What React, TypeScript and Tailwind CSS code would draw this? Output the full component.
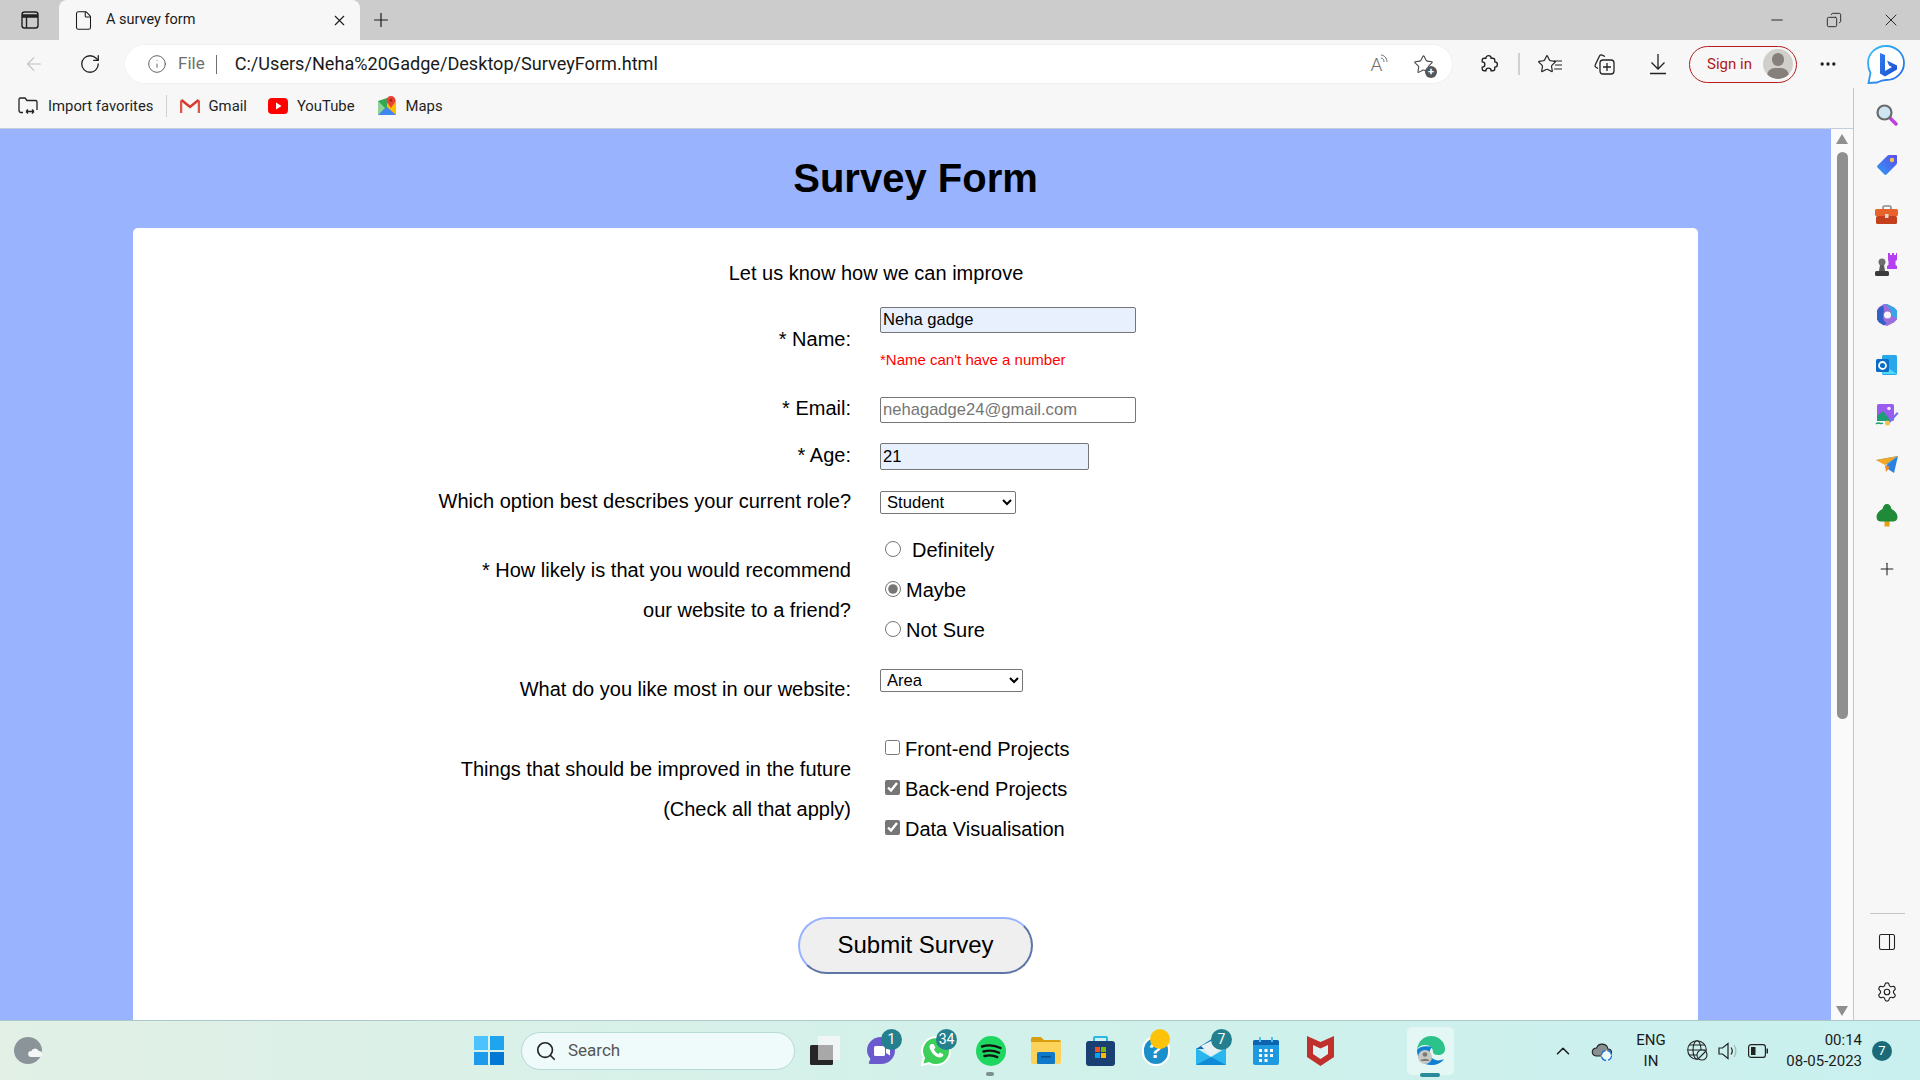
import type { ReactNode } from "react";
import {
  ArrowLeft,
  ChevronUp,
  Copy,
  Ellipsis,
  File,
  Info,
  Minus,
  PanelRight,
  Plus,
  RotateCw,
  Search,
  Settings,
  Star,
  X,
} from "lucide-react";

const ui = "font-['Roboto','Noto_Sans',sans-serif]";

function Slot({ children, className = "" }: { children: ReactNode; className?: string }) {
  return <div className={`flex h-[38px] w-[44px] shrink-0 items-center justify-center ${className}`}>{children}</div>;
}

function SideSlot({ children, className = "" }: { children: ReactNode; className?: string }) {
  return <div className={`flex h-[50px] w-full shrink-0 items-center justify-center ${className}`}>{children}</div>;
}

function TaskSlot({ children, badge, dot }: { children: ReactNode; badge?: string; dot?: boolean }) {
  return (
    <div className="relative flex h-[60px] w-[55px] shrink-0 items-center justify-center">
      {children}
      {badge && (
        <span className="absolute left-[28px] top-[8px] flex h-[21px] min-w-[21px] items-center justify-center rounded-full bg-[#24808f] px-[2px] text-[14px] text-white">
          {badge}
        </span>
      )}
      {dot && <span className="absolute left-[23px] bottom-[5px] h-[4px] w-[8px] rounded-full bg-[#7b8f91]" />}
    </div>
  );
}

function Bing() {
  return (
    <svg width="40" height="40" viewBox="0 0 40 40">
      <defs>
        <linearGradient id="bingRing" x1="0" y1="0" x2="1" y2="1">
          <stop offset="0" stopColor="#36c5f0" />
          <stop offset="1" stopColor="#2563eb" />
        </linearGradient>
        <linearGradient id="bingB" x1="0" y1="0" x2="1" y2="1">
          <stop offset="0" stopColor="#2f7df0" />
          <stop offset="1" stopColor="#1a4fd0" />
        </linearGradient>
      </defs>
      <path d="M20 2c10 0 18 7.500 18 17s-8 17-18 17c-3 0-6 1-9 2.500L2.500 39 4.500 29C2.800 26 2 22.500 2 19 2 9.500 10 2 20 2z" fill="#fff" stroke="url(#bingRing)" strokeWidth="1.800" />
      <path d="M14 9l5 2v16l7-4-3-1.500-2-5 10 5v4l-12 7-5-3z" fill="url(#bingB)" />
    </svg>
  );
}

function Gmail() {
  return (
    <svg width="20" height="16" viewBox="0 0 20 16">
      <path d="M1 15V2l9 7 9-7v13" fill="none" stroke="#e8e8e8" strokeWidth="2" />
      <path d="M1 15V2.500M19 15V2.500" stroke="#d9574a" strokeWidth="2.500" />
      <path d="M1.500 2l8.500 7 8.500-7" fill="none" stroke="#d93a2e" strokeWidth="2.500" />
    </svg>
  );
}

function YouTube() {
  return (
    <svg width="20" height="16" viewBox="0 0 20 16">
      <rect width="20" height="16" rx="4" fill="#f00" />
      <path d="M8 4.500l5.500 3.500L8 11.500z" fill="#fff" />
    </svg>
  );
}

function Maps() {
  return (
    <svg width="20" height="20" viewBox="0 0 20 20">
      <path d="M1 5l9-3v16l-9 1z" fill="#34a853" />
      <path d="M10 2l9 2v15l-9-1z" fill="#fbbc04" />
      <path d="M1 19l9-8 9 8z" fill="#4285f4" />
      <path d="M1 5l7 7-7 7z" fill="#8fd39c" />
      <path d="M14 0c2.500 0 4.500 2 4.500 4.300 0 2.700-3 5-4.500 7.700-1.500-2.700-4.500-5-4.500-7.700C9.500 2 11.500 0 14 0z" fill="#ea4335" />
      <circle cx="14" cy="4.300" r="1.500" fill="#a52714" />
    </svg>
  );
}

function SideIcons() {
  return (
    <>
      <SideSlot>
        <svg width="22" height="22" viewBox="0 0 22 22">
          <path d="M13 13l7 7" stroke="#c13fe0" strokeWidth="3.500" strokeLinecap="round" />
          <circle cx="8.500" cy="8.500" r="7" fill="#cfe6f2" stroke="#6b6b6b" strokeWidth="2.200" />
        </svg>
      </SideSlot>
      <SideSlot>
        <svg width="22" height="22" viewBox="0 0 22 22">
          <defs>
            <linearGradient id="tagFill" x1="1" y1="0" x2="0" y2="1">
              <stop offset="0" stopColor="#5b4df0" />
              <stop offset="1" stopColor="#2f9af2" />
            </linearGradient>
          </defs>
          <path d="M13 1h7a1 1 0 0 1 1 1v7a2 2 0 0 1-.600 1.400L10.500 20.500a1.500 1.500 0 0 1-2 0L1.500 13.500a1.500 1.500 0 0 1 0-2L11.600 1.600A2 2 0 0 1 13 1z" fill="url(#tagFill)" />
          <circle cx="16" cy="6" r="2.200" fill="#f5c542" />
        </svg>
      </SideSlot>
      <SideSlot>
        <svg width="24" height="20" viewBox="0 0 24 20">
          <path d="M8 5V2.500A1.500 1.500 0 0 1 9.500 1h5A1.500 1.500 0 0 1 16 2.500V5" fill="none" stroke="#8a8a8a" strokeWidth="1.600" />
          <rect y="4" width="23" height="7" rx="1.500" fill="#e8622c" />
          <rect x="1" y="11" width="21" height="8" rx="1.500" fill="#c4401c" />
          <rect x="10" y="9" width="3.500" height="4" rx=".6" fill="#d9d9d9" />
        </svg>
      </SideSlot>
      <SideSlot>
        <svg width="24" height="24" viewBox="0 0 24 24">
          <path d="M14 1h2v2h2V1h2v2h2V1h1v7l-1.500 1v4l1.500 1v3H13v-3l1.500-1V9L14 8z" fill="#b43ff0" transform="translate(-1 -1)" />
          <circle cx="7" cy="9" r="3.500" fill="#6e6e6e" />
          <path d="M5 12h4l1 6H4z" fill="#5a5a5a" />
          <rect y="18" width="14" height="5" rx="1.500" fill="#3b3b3b" />
        </svg>
      </SideSlot>
      <SideSlot>
        <svg width="22" height="24" viewBox="0 0 22 24">
          <path d="M11 1l7 3.500 3 3v9l-3 3-7 3.500-3-1-5-3-2-3v-9l2-3 5-3z" fill="#9a6fdc" />
          <path d="M9 1.500L11 1l7 3.500 3 3v8l-5-3c-.500-5-3-9-7-11.500z" fill="#36a6e6" />
          <path d="M1 8l2-3 4-2.500C9 7 7 10 7 14c0 3 1.500 5 3.500 6L8 22.500 3 19.500l-2-3z" fill="#3260c4" />
          <circle cx="11.500" cy="12" r="3.500" fill="#f7f7f7" />
        </svg>
      </SideSlot>
      <SideSlot>
        <svg width="22" height="22" viewBox="0 0 22 22">
          <rect x="6" y="1" width="15" height="20" rx="1.500" fill="#28a8ea" />
          <path d="M6 10l15 10H8a2 2 0 0 1-2-2z" fill="#50d9ff" />
          <rect y="5" width="13" height="13" rx="1.500" fill="#0a6cc4" />
          <circle cx="6.500" cy="11.500" r="3.500" fill="none" stroke="#fff" strokeWidth="1.800" />
        </svg>
      </SideSlot>
      <SideSlot>
        <svg width="24" height="24" viewBox="0 0 24 24">
          <rect x="2" y="1" width="17" height="17" rx="1.500" fill="#9a5cf0" />
          <path d="M2 18v-5l6-5 8 10z" fill="#1f9d77" />
          <circle cx="14" cy="5.500" r="1.800" fill="#f0e6ff" />
          <path d="M1 21c3-3 4 1 7-1" stroke="#16a06e" strokeWidth="1.500" fill="none" />
          <path d="M13 19L22 9l1.500 1.500L15 20z" fill="#7a6cf5" />
          <circle cx="12.500" cy="20" r="2.500" fill="#f2c14e" />
        </svg>
      </SideSlot>
      <SideSlot>
        <svg width="24" height="18" viewBox="0 0 24 18">
          <path d="M1 4l22-4-8 10z" fill="#35a6f0" />
          <path d="M1 4l9 5 13-9z" fill="#f5a623" />
          <path d="M23 0l-4 17-9-6z" fill="#2a7fe0" />
          <path d="M10 9l1 7 4-5z" fill="#f08a24" />
        </svg>
      </SideSlot>
      <SideSlot>
        <svg width="22" height="24" viewBox="0 0 22 24">
          <rect x="8.500" y="17" width="5" height="6.500" fill="#e8a013" />
          <path d="M11 1c2.500 0 4 2 4.500 5C19 7.500 21.500 11 21.500 14c0 3-2 4.500-4.500 4.500H5C2.500 18.500.5 17 .5 14c0-3 2.500-6.500 6-8C7 3 8.500 1 11 1z" fill="#1f8a38" />
        </svg>
      </SideSlot>
      <SideSlot className="mt-[4px]">
        <Plus size={20} strokeWidth={1.300} className="text-[#222]" />
      </SideSlot>
    </>
  );
}

function TaskIcons() {
  return (
    <>
      <TaskSlot>
        <svg width="31" height="29" viewBox="0 0 31 29">
          <rect x="0" y="9" width="23" height="20" rx="1.500" fill="#262626" />
          <rect x="8" y="0" width="22" height="24" rx="1.500" fill="#f4f7f7" fillOpacity=".85" />
          <rect x="8" y="9" width="15" height="15" fill="#a8a8a8" />
        </svg>
      </TaskSlot>
      <TaskSlot badge="1">
        <svg width="30" height="29" viewBox="0 0 30 29">
          <path d="M15 1c8 0 14 6 14 13.500S23 28 15 28H4c-1 0-1.500-1-1-2l1.500-3C2.500 20.500 1 17.500 1 14.500 1 7 7 1 15 1z" fill="#6a5acd" />
          <rect x="8" y="10" width="11" height="10" rx="1.500" fill="#fff" />
          <path d="M20 13l4-2.500v9L20 17z" fill="#fff" />
        </svg>
      </TaskSlot>
      <TaskSlot badge="34">
        <svg width="30" height="30" viewBox="0 0 30 30">
          <path d="M15 1a14 14 0 0 1 0 28c-2.500 0-5-.700-7-2L1 29l2-7A14 14 0 0 1 15 1z" fill="#3ccf5a" stroke="#fff" strokeWidth="2" />
          <path d="M10 8c-2 1.500-2 4 0 7 2 3.500 5 6 8 6.500 2.500.300 4-1 4.500-3l-3.500-2-1.500 1.500c-2-1-3.500-2.500-4.500-4.500L14.500 11.500 12.500 8z" fill="#fff" />
        </svg>
      </TaskSlot>
      <TaskSlot dot>
        <svg width="30" height="30" viewBox="0 0 30 30">
          <circle cx="15" cy="15" r="15" fill="#1ed760" />
          <path d="M6 10.500c6-1.800 13-1.300 18.500 1.500M7.500 15.500c5-1.400 11-1 15.500 1.300M8.500 20c4.500-1.100 9-.800 12.800 1.100" fill="none" stroke="#111" strokeWidth="2.400" strokeLinecap="round" />
        </svg>
      </TaskSlot>
      <TaskSlot>
        <svg width="30" height="27" viewBox="0 0 30 27">
          <path d="M0 2a2 2 0 0 1 2-2h8l3 3h15a2 2 0 0 1 2 2v3H0z" fill="#d99e0f" />
          <path d="M0 5h30v20a2 2 0 0 1-2 2H2a2 2 0 0 1-2-2z" fill="#fbd35a" />
          <rect x="6" y="15" width="18" height="12" rx="1.500" fill="#0f78c9" />
          <rect x="10" y="19" width="10" height="1.500" fill="#0a4f8a" />
        </svg>
      </TaskSlot>
      <TaskSlot>
        <svg width="29" height="30" viewBox="0 0 29 30">
          <path d="M8 6V2a1 1 0 0 1 1-1h11a1 1 0 0 1 1 1v4" fill="none" stroke="#2bb6e8" strokeWidth="2" />
          <rect y="5" width="29" height="25" rx="3" fill="#1a3f73" />
          <rect x="9" y="11" width="5" height="5" fill="#f25022" />
          <rect x="15" y="11" width="5" height="5" fill="#7fba00" />
          <rect x="9" y="17" width="5" height="5" fill="#00a4ef" />
          <rect x="15" y="17" width="5" height="5" fill="#ffb900" />
        </svg>
      </TaskSlot>
      <div className="relative flex h-[60px] w-[55px] shrink-0 items-center justify-center">
        <span className="flex h-[30px] w-[28px] items-center justify-center rounded-full border-2 border-white bg-[#1b8fc9] font-['Liberation_Sans',sans-serif] text-[22px] font-bold leading-none text-white">
          ?
        </span>
        <span className="absolute left-[22px] top-[8px] h-[20px] w-[20px] rounded-full bg-[#fdc30b]" />
      </div>
      <TaskSlot badge="7">
        <svg width="30" height="28" viewBox="0 0 30 28">
          <path d="M0 12L19 0v12z" fill="#0f6cbd" />
          <path d="M5 9l14-7 6 10-10 7z" fill="#e8f2f4" />
          <path d="M0 11l15 9 15-9v17H0z" fill="#29b6ef" />
          <path d="M0 28l15-8 15 8z" fill="#0f8ad6" />
        </svg>
      </TaskSlot>
      <TaskSlot>
        <svg width="26" height="28" viewBox="0 0 26 28">
          <path d="M2 3h22a2 2 0 0 1 2 2v21a2 2 0 0 1-2 2H2a2 2 0 0 1-2-2V5a2 2 0 0 1 2-2z" fill="#1f9ae0" />
          <path d="M0 5a2 2 0 0 1 2-2h22a2 2 0 0 1 2 2v3H0z" fill="#0f62ae" />
          <path d="M7 0v5M19 0v5" stroke="#49c3f2" strokeWidth="2" />
          <path d="M6 12h3v3H6zM11.500 12h3v3h-3zM17 12h3v3h-3zM6 17h3v3H6zM11.500 17h3v3h-3zM17 17h3v3h-3zM6 22h3v3H6zM11.500 22h3v3h-3z" fill="#fff" />
        </svg>
      </TaskSlot>
      <TaskSlot>
        <svg width="27" height="30" viewBox="0 0 27 30">
          <path d="M0 0l13.500 6L27 0v21l-13.500 9L0 21z" fill="#c0302c" />
          <path d="M6 9l7.500 3.500L21 9v9l-7.500 5L6 18z" fill="#d9f3f2" />
        </svg>
      </TaskSlot>
    </>
  );
}

export default function App() {
  const labelText = "w-[718px] shrink-0 text-right";
  const boxInput = "block border border-[#767676] rounded-[2px] px-[2px] text-[16.600px] text-black";

  return (
    <div className={`flex h-[1080px] w-[1920px] flex-col overflow-hidden bg-[#f7f7f7] ${ui}`}>
      {/* tab strip */}
      <div className="flex h-[40px] shrink-0 items-center bg-[#cccccc] text-[#1a1a1a]">
        <div className="flex w-[59px] shrink-0 justify-center">
          <svg width="20" height="20" viewBox="0 0 20 20" fill="none" stroke="#222" strokeWidth="1.400">
            <rect x="2" y="2" width="16" height="16" rx="2.500" />
            <path d="M2 6h16" strokeWidth="3.500" />
            <path d="M6.500 6v12" />
          </svg>
        </div>
        <div className="flex h-[40px] w-[301px] shrink-0 items-center rounded-t-[8px] bg-[#f7f7f7] pl-[14px] pr-[12px]">
          <File size={21} strokeWidth={1.200} />
          <span className="ml-[12px] text-[14.500px]">A survey form</span>
          <X size={17} strokeWidth={1.500} className="ml-auto" />
        </div>
        <Plus size={22} strokeWidth={1.300} className="ml-[10px]" />
        <div className="ml-auto flex items-center">
          <Minus size={18} strokeWidth={1.200} className="mr-[40px]" />
          <Copy size={16} strokeWidth={1.300} className="mr-[39px] -scale-x-100" />
          <X size={20} strokeWidth={1.100} className="mr-[19px]" />
        </div>
      </div>

      {/* address toolbar */}
      <div className="flex h-[48px] shrink-0 items-center pl-[12px] text-[#1f1f1f]">
        <Slot>
          <ArrowLeft size={22} strokeWidth={1.200} className="text-[#c2c2c2]" />
        </Slot>
        <Slot className="ml-[12px]">
          <RotateCw size={22} strokeWidth={1.400} />
        </Slot>
        <div className="ml-[13px] flex h-[38px] w-[1327px] shrink-0 items-center rounded-full bg-white pl-[22px] pr-[6px] shadow-[0_0_2px_rgba(0,0,0,0.08)]">
          <Info size={20} strokeWidth={1.200} className="text-[#666]" />
          <span className="ml-[11px] text-[17px] text-[#6e6e6e]">File</span>
          <span className="ml-[11px] h-[19px] w-px bg-[#6e6e6e]" />
          <span className="ml-[18px] pb-[1px] text-[18.100px] text-[#1a1a1a]">C:/Users/Neha%20Gadge/Desktop/SurveyForm.html</span>
          <div className="ml-auto flex">
            <Slot className="!w-[45px] pr-[4px]">
              <span className="relative text-[19px] font-light leading-none text-[#707070]">
                A
                <svg className="absolute -right-[8px] -top-[1px]" width="10" height="10" viewBox="0 0 10 10" fill="none" stroke="#707070" strokeWidth="1">
                  <path d="M1 1c3 0 6 3 6 7M1 4c2 0 3 2 3 4" />
                </svg>
              </span>
            </Slot>
            <Slot className="!w-[45px]">
              <span className="relative">
                <Star size={21} strokeWidth={1.200} className="text-[#444]" />
                <span className="absolute -bottom-[3px] -right-[3px] flex h-[12px] w-[12px] items-center justify-center rounded-full bg-[#555] text-[11px] font-bold leading-none text-white">
                  +
                </span>
              </span>
            </Slot>
          </div>
        </div>
        <Slot className="ml-[14px]">
          <svg width="23" height="23" viewBox="0 0 22 22" fill="none" stroke="#222" strokeWidth="1.300">
            <path d="M7 5h1.500a2.500 2.500 0 0 1 5 0H15a2 2 0 0 1 2 2v1.500a2.500 2.500 0 0 1 0 5V15a2 2 0 0 1-2 2h-1.500a2.500 2.500 0 0 0-5 0H7a2 2 0 0 1-2-2v-1.500a2.500 2.500 0 0 0 0-5V7a2 2 0 0 1 2-2z" />
          </svg>
        </Slot>
        <span className="ml-[8px] h-[22px] w-[2px] bg-[#d0d0d0]" />
        <Slot className="ml-[7px]">
          <span className="relative flex">
            <Star size={20} strokeWidth={1.400} className="-ml-[4px]" />
            <svg className="absolute -right-[5px] top-[6px]" width="9" height="10" viewBox="0 0 9 10" stroke="#222" strokeWidth="1.200">
              <path d="M1 1h8M2 5h7M1 9h8" />
            </svg>
          </span>
        </Slot>
        <Slot className="ml-[11px]">
          <svg width="22" height="22" viewBox="0 0 22 22" fill="none" stroke="#222" strokeWidth="1.300">
            <path d="M5 15.500l-2-1.200a2 2 0 0 1-.700-2.600L6.500 3a2 2 0 0 1 2.600-.800L12 3.500" />
            <rect x="7" y="7" width="14" height="14" rx="3" />
            <path d="M14 10v8M10 14h8" />
          </svg>
        </Slot>
        <Slot className="ml-[10px]">
          <svg width="20" height="22" viewBox="0 0 20 22" fill="none" stroke="#222" strokeWidth="1.300">
            <path d="M10 1v15M3.500 9.500L10 16l6.500-6.500M2 20.500h16" />
          </svg>
        </Slot>
        <div className="ml-[9px] flex h-[37px] w-[108px] shrink-0 items-center rounded-full border border-[#b51c1c] pl-[17px] pr-[3px]">
          <span className="text-[15px] text-[#b01818]">Sign in</span>
          <span className="relative ml-auto h-[30px] w-[30px] overflow-hidden rounded-full bg-[#d0cfca]">
            <span className="absolute left-[9px] top-[4px] h-[13px] w-[12px] rounded-full bg-[#85807a]" />
            <span className="absolute left-[4px] top-[19px] h-[16px] w-[22px] rounded-full bg-[#85807a]" />
          </span>
        </div>
        <Slot className="ml-[9px]">
          <Ellipsis size={20} strokeWidth={2} />
        </Slot>
        <Slot className="ml-[14px]">
          <Bing />
        </Slot>
      </div>

      <div className="flex min-h-0 flex-1">
        <div className="flex w-[1853px] shrink-0 flex-col">
          {/* favorites bar */}
          <div className="flex h-[41px] shrink-0 items-center border-b border-[#c4cde0] pb-[4px] text-[14.850px] text-[#1f1f1f]">
            <svg className="ml-[18px]" width="20" height="20" viewBox="0 0 20 20" fill="none" stroke="#222" strokeWidth="1.300">
              <path d="M1 14V3.500A1.500 1.500 0 0 1 2.500 2H7l2 2.500h8.500A1.500 1.500 0 0 1 19 6v8M1 14c0 1.500.500 2.500 2 2.500h2" />
              <path d="M9 15.500h8M9 15.500l2-2M9 15.500l2 2M17 15.500l-2-2M17 15.500l-2 2" transform="translate(-1 0)" />
            </svg>
            <span className="ml-[10px]">Import favorites</span>
            <span className="ml-[12px] h-[22px] w-px bg-[#d0d0d0]" />
            <span className="ml-[13px] flex"><Gmail /></span>
            <span className="ml-[9px]">Gmail</span>
            <span className="ml-[21px] flex"><YouTube /></span>
            <span className="ml-[9px]">YouTube</span>
            <span className="ml-[22px] flex"><Maps /></span>
            <span className="ml-[9px]">Maps</span>
          </div>

          <div className="flex min-h-0 flex-1">
            {/* page */}
            <main className="h-full w-[1831px] shrink-0 overflow-hidden bg-[#99b3ff] font-['Liberation_Sans',sans-serif] text-[20px] text-black">
              <h1 className="flex h-[99px] items-center justify-center pb-[2px] text-[40px] font-bold leading-none">Survey Form</h1>
              <div className="ml-[133px] h-[900px] w-[1565px] rounded-[5px] bg-white pt-[33px]">
                <p className="w-[1486px] text-center leading-[24px]">Let us know how we can improve</p>

                <div className="mt-[15px] flex h-[78px]">
                  <label className={`${labelText} pt-[19px] leading-[40px]`}>* Name:</label>
                  <div className="ml-[29px] pt-[7px]">
                    <input readOnly value="Neha gadge" className={`${boxInput} h-[26px] w-[256px] bg-[#e8f0fe]`} />
                    <p className="mt-[17px] text-[15px] leading-[20px] text-[#ff0000]">*Name can't have a number</p>
                  </div>
                </div>

                <div className="mt-[10px] flex h-[40px]">
                  <label className={`${labelText} leading-[40px]`}>* Email:</label>
                  <div className="ml-[29px] pt-[9px]">
                    <input readOnly placeholder="nehagadge24@gmail.com" className={`${boxInput} h-[26px] w-[256px] bg-white placeholder:text-[#757575]`} />
                  </div>
                </div>

                <div className="mt-[7px] flex h-[40px]">
                  <label className={`${labelText} leading-[40px]`}>* Age:</label>
                  <div className="ml-[29px] pt-[8px]">
                    <input readOnly value="21" className={`${boxInput} h-[27px] w-[209px] bg-[#e8f0fe]`} />
                  </div>
                </div>

                <div className="mt-[6px] flex h-[40px]">
                  <label className={`${labelText} leading-[40px]`}>Which option best describes your current role?</label>
                  <div className="ml-[29px] pt-[10px]">
                    <select defaultValue="Student" className="block h-[23px] w-[136px] rounded-[2px] border border-[#767676] bg-white pl-[2px] text-[16.600px] leading-none">
                      <option>Student</option>
                    </select>
                  </div>
                </div>

                <div className="mt-[9px] flex h-[120px]">
                  <label className={`${labelText} pt-[20px] leading-[40px]`}>
                    * How likely is that you would recommend
                    <br />
                    our website to a friend?
                  </label>
                  <div className="ml-[29px] leading-[40px]">
                    <div className="flex items-center pl-[5px]">
                      <input type="radio" name="likely" readOnly className="h-[16px] w-[16px] -translate-y-px accent-[#767676]" />
                      <span className="ml-[11px]">Definitely</span>
                    </div>
                    <div className="flex items-center pl-[5px]">
                      <input type="radio" name="likely" readOnly checked className="h-[16px] w-[16px] -translate-y-px accent-[#767676]" />
                      <span className="ml-[5px]">Maybe</span>
                    </div>
                    <div className="flex items-center pl-[5px]">
                      <input type="radio" name="likely" readOnly className="h-[16px] w-[16px] -translate-y-px accent-[#767676]" />
                      <span className="ml-[5px]">Not Sure</span>
                    </div>
                  </div>
                </div>

                <div className="mt-[19px] flex h-[40px]">
                  <label className={`${labelText} leading-[40px]`}>What do you like most in our website:</label>
                  <div className="ml-[29px]">
                    <select defaultValue="Area" className="block h-[23px] w-[143px] rounded-[2px] border border-[#767676] bg-white pl-[2px] text-[16.600px] leading-none">
                      <option>Area</option>
                    </select>
                  </div>
                </div>

                <div className="mt-[19px] flex h-[120px]">
                  <label className={`${labelText} pt-[21px] leading-[40px]`}>
                    Things that should be improved in the future
                    <br />
                    (Check all that apply)
                  </label>
                  <div className="ml-[29px] pt-[1px] leading-[40px]">
                    {[
                      { text: "Front-end Projects", on: false },
                      { text: "Back-end Projects", on: true },
                      { text: "Data Visualisation", on: true },
                    ].map((item) => (
                      <div key={item.text} className="flex items-center pl-[5px]">
                        <input type="checkbox" readOnly checked={item.on} className="h-[15px] w-[15px] -translate-y-[2px] accent-[#767676]" />
                        <span className="ml-[5px]">{item.text}</span>
                      </div>
                    ))}
                  </div>
                </div>

                <button className="mx-auto mt-[69px] block h-[57px] w-[235px] rounded-full border-2 border-t-[#99b3ff] border-l-[#99b3ff] border-r-[#5f75a8] border-b-[#5f75a8] bg-[#efefef] pb-[1px] text-[24px]">
                  Submit Survey
                </button>
              </div>
            </main>

            {/* scrollbar */}
            <div className="flex w-[22px] shrink-0 flex-col items-center bg-[#fafafa] pb-[4px] pt-[5px]">
              <svg width="12" height="10" viewBox="0 0 12 10" className="shrink-0">
                <path d="M6 0l6 10H0z" fill="#8f8f8f" />
              </svg>
              <div className="mt-[8px] h-[567px] w-[11px] rounded-full bg-[#8f8f8f]" />
              <svg width="12" height="10" viewBox="0 0 12 10" className="mt-auto shrink-0">
                <path d="M6 10L0 0h12z" fill="#8f8f8f" />
              </svg>
            </div>
          </div>
        </div>

        {/* edge sidebar */}
        <aside className="flex flex-1 flex-col items-center border-l border-[#c6c6c6] bg-[#f7f7f7] pt-[2px]">
          <SideIcons />
          <div className="mt-auto h-px w-[35px] bg-[#c6c6c6]" />
          <SideSlot className="mt-[3px]">
            <PanelRight size={20} strokeWidth={1.300} className="text-[#222]" />
          </SideSlot>
          <SideSlot className="mb-[3px]">
            <Settings size={22} strokeWidth={1.300} className="text-[#222]" />
          </SideSlot>
        </aside>
      </div>

      {/* windows taskbar */}
      <footer className="flex h-[60px] shrink-0 items-center border-t border-[#aec9c9] bg-gradient-to-r from-[#e2f0e6] via-[#d2f1ea] to-[#c9f0ef] text-[#1c1c1c]">
        <svg className="ml-[14px]" width="30" height="27" viewBox="0 0 30 27">
          <ellipse cx="14" cy="13.500" rx="14" ry="13.500" fill="#8a9499" />
          <path d="M17 20a3 3 0 0 1 .300-6 4 4 0 0 1 7.500 0 3 3 0 0 1 1 6z" fill="#f5f7f7" />
        </svg>
        <div className="ml-[430px] grid h-[29px] w-[30px] grid-cols-2 gap-[2px]">
          <span className="bg-[#4cc2ff]" />
          <span className="bg-[#1fa5f0]" />
          <span className="bg-[#1c9bec]" />
          <span className="bg-[#0078d4]" />
        </div>
        <div className="ml-[17px] flex h-[38px] w-[274px] items-center rounded-full border border-[#b7d9d7] bg-[#eefbfa] pl-[13px] text-[#555]">
          <Search size={22} strokeWidth={1.800} className="text-[#222]" />
          <span className="ml-[11px] text-[17px]">Search</span>
        </div>
        <div className="ml-[3px] flex">
          <TaskIcons />
        </div>
        <div className="relative ml-[59px] flex h-[48px] w-[47px] items-center justify-center rounded-[5px] bg-white/45">
          <svg width="31" height="31" viewBox="0 0 31 31">
            <path d="M2 15C3 6 9 1 16 1c8 0 14 6 14 13 0 4-3 6-7 6-3 0-5-1-5-3 0-4-3-7-8-7-4 0-7 2-8 5z" fill="#2bc38a" />
            <path d="M2 15c0 9 6 15 14 15 6 0 10-2 13-6-4 2-9 2-12-1-3-3-3-8 0-11-7-2-13 0-15 3z" fill="#0f7fd1" />
            <circle cx="10" cy="22" r="7" fill="#c9c9c4" />
            <circle cx="10" cy="19.500" r="2.300" fill="#7b7b75" />
            <path d="M5.500 26c1-3 8-3 9 0z" fill="#7b7b75" />
          </svg>
          <span className="absolute bottom-[-2px] left-[13px] h-[4px] w-[20px] rounded-full bg-[#2a8a9a]" />
        </div>
        <ChevronUp size={22} strokeWidth={1.700} className="ml-[98px]" />
        <svg className="ml-[17px]" width="22" height="20" viewBox="0 0 22 20">
          <path d="M5 15a4 4 0 0 1 .500-8 6 6 0 0 1 11.500 1 3.500 3.500 0 0 1 0 7z" fill="#8a8f92" stroke="#222" strokeWidth="1.100" />
          <circle cx="15.500" cy="14.500" r="5" fill="#eefbfa" stroke="#1a6fd0" strokeWidth="1.300" strokeDasharray="6 2" />
        </svg>
        <div className="ml-[16px] w-[44px] text-center text-[15px] leading-[21px]">
          ENG
          <br />
          IN
        </div>
        <svg className="ml-[14px]" width="21" height="21" viewBox="0 0 21 21" fill="none" stroke="#222" strokeWidth="1.100">
          <circle cx="10" cy="10" r="9.300" />
          <ellipse cx="10" cy="10" rx="4" ry="9.300" />
          <path d="M1 10h18M2.500 5h15M2.500 15h8" />
          <circle cx="15" cy="15" r="5" fill="#c9f0ef" stroke="#222" />
          <path d="M12 18l6-6" />
        </svg>
        <svg className="ml-[10px]" width="20" height="20" viewBox="0 0 20 20" fill="none" stroke="#222" strokeWidth="1.200">
          <path d="M1 7h3.500L10 2.500v15L4.500 13H1z" />
          <path d="M13 6.500c1.500 2 1.500 5 0 7" />
          <path d="M16 4c2.500 3.500 2.500 8.500 0 12" stroke="#9fb5b5" />
        </svg>
        <svg className="ml-[10px]" width="20" height="14" viewBox="0 0 20 14">
          <rect x=".6" y=".6" width="16.800" height="12.800" rx="2.500" fill="none" stroke="#222" strokeWidth="1.200" />
          <rect x="3" y="3" width="4.500" height="8" fill="#222" />
          <path d="M18.500 4.500h1a.5.5 0 0 1 .5.5v4a.5.5 0 0 1-.5.5h-1z" fill="#222" />
        </svg>
        <div className="ml-[17px] w-[77px] text-right text-[15px] leading-[21px]">
          00:14
          <br />
          08-05-2023
        </div>
        <span className="ml-[10px] flex h-[20px] w-[20px] items-center justify-center rounded-full bg-[#1b6a78] text-[13px] text-white">7</span>
      </footer>
    </div>
  );
}
